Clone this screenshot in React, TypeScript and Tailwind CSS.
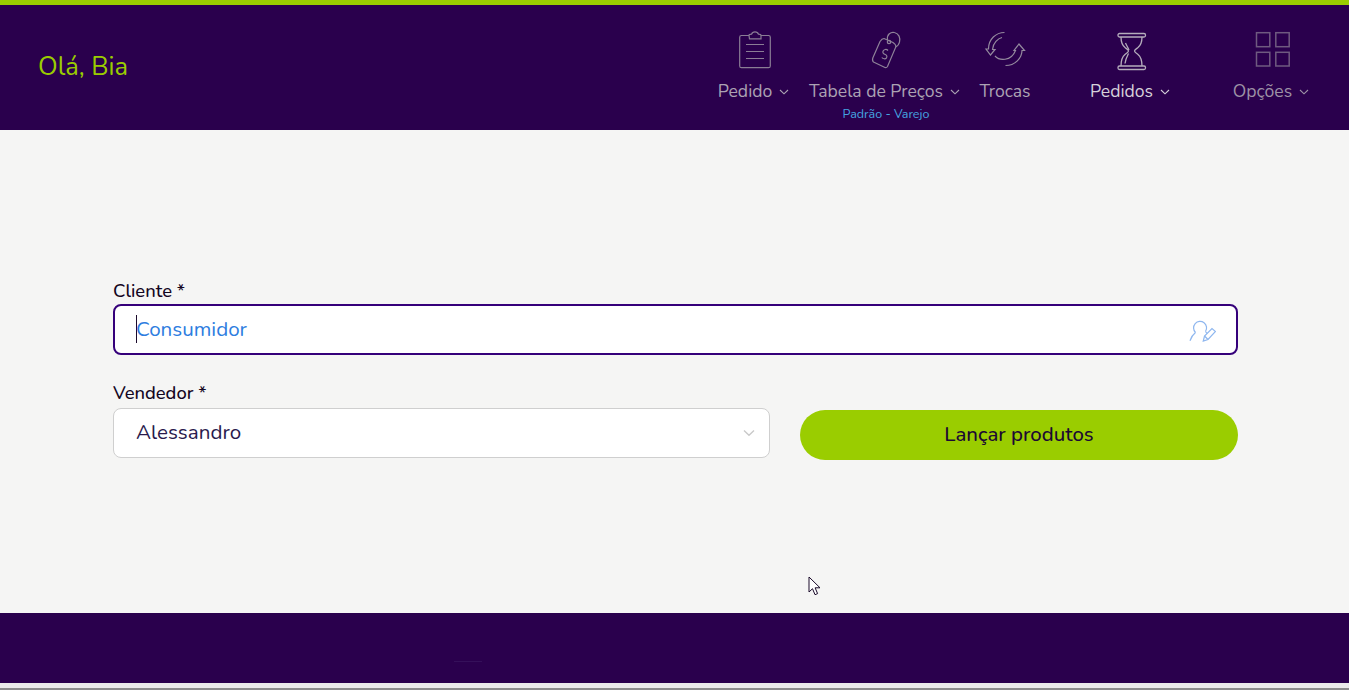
import React from "react";

const font = { fontFamily: '"Nunito", "Noto Sans", "Open Sans", sans-serif' };

function Chev({ className = "" }: { className?: string }) {
  return (
    <svg width="10" height="6" viewBox="0 0 10 6" fill="none" stroke="currentColor" strokeWidth="1.1" className={className}>
      <path d="M1 1l4 3.800L9 1" />
    </svg>
  );
}

function Clip() {
  return (
    <svg className="shrink-0" width="50" height="50" viewBox="0 0 50 50" fill="none" stroke="#8a7d95" strokeWidth="1.2">
      <path d="M20 10.500h-7.500a1.800 1.800 0 0 0-1.800 1.800v28.600a1.800 1.800 0 0 0 1.800 1.800h27a1.800 1.800 0 0 0 1.800-1.800V12.300a1.800 1.800 0 0 0-1.800-1.800H32" />
      <path d="M20.500 13.800h11.500v-3.300c0-1-1-1.300-2.500-1.300-.5-1.500-2-2.400-3.500-2.400s-3 .9-3.500 2.400c-1.500 0-2.500.3-2.500 1.300z" />
      <path d="M17 19.500h18M17 26.500h18M17 33.500h18" />
    </svg>
  );
}

function Tag() {
  return (
    <svg className="shrink-0" width="50" height="50" viewBox="0 0 50 50" fill="none" stroke="#8f8299" strokeWidth="1.200">
      <path d="M12.800 33 20 16.500Q22 13.500 24 13.500L33 17.500Q36 19.500 36 21.500L27.500 41.500Q26.500 43 25 42.500L13.500 37Q12 36 12.800 33Z" />
      <circle cx="29" cy="17" r="1.700" />
      <path d="M27.500 15C26.500 9.500 31 6.500 34.500 7.500 39 8.500 40.500 13 39.500 17 39 19.500 37.500 21 35.500 22" />
      <path d="M28 25.500C26.500 23.800 23.800 24.300 23 26.200 22.400 28 23.800 29 25.300 29.500 26.800 30 27.300 31.500 26.500 32.800 25.500 34.300 23 34 21.800 32.500" strokeWidth="1.200" />
    </svg>
  );
}

function Sync() {
  return (
    <svg className="shrink-0" width="60" height="50" viewBox="0 0 60 50" fill="none" stroke="#958a9f" strokeWidth="1.200">
      <path d="M29.500 7.500C21 7.500 13.500 14 13.500 24H11L15.500 30 20 24.500H17.500C18 18 23 13.500 27 12.500" />
      <path d="M20 31C24 35.500 36 37 40.500 25.500H39L44 19 49.500 25.500H47C47 33 40 40.500 30.500 40.500" />
    </svg>
  );
}

function Hourglass() {
  return (
    <svg className="-translate-x-px shrink-0" width="50" height="50" viewBox="0 0 50 50" fill="none" stroke="#b5adbc" strokeWidth="1.300">
      <rect x="13" y="8.500" width="27.500" height="3.500" rx="1.500" />
      <rect x="13" y="41" width="27.500" height="3.500" rx="1.500" />
      <path d="M16 12c0 6 1.500 8.500 4 10.500 2 1.600 3.500 2.500 3.500 3.500s-1.500 2-3.500 3.500C17.500 31.500 16 35 16 41" />
      <path d="M37 12c0 6-1.500 8.500-4 10.500-2 1.600-3.500 2.500-3.500 3.500s1.500 2 3.500 3.500c2.500 2 4 5.500 4 11.500" />
      <path d="M20.500 18c1 2.500 2.500 4.500 3.500 7M23.500 28.500C22 31.500 20.500 34 20 38.500" />
    </svg>
  );
}

function Grid4() {
  return (
    <svg className="shrink-0" width="50" height="50" viewBox="0 0 50 50" fill="none" stroke="#6f5a80" strokeWidth="1.500">
      <rect x="9.500" y="7.700" width="13.300" height="14" />
      <rect x="28.800" y="7.700" width="13.400" height="14" />
      <rect x="9.500" y="27.300" width="13.300" height="13.700" />
      <rect x="28.800" y="27.300" width="13.400" height="13.700" />
    </svg>
  );
}

function UserEdit() {
  return (
    <svg className="shrink-0" width="28" height="26" viewBox="0 0 28 26" fill="none" stroke="#8fb7ef" strokeWidth="1.200">
      <path d="M7.500 15.500A6.500 6.500 0 1 1 17.500 14.500" />
      <path d="M7.500 15.500C5 17.500 3 20.500 2 23.700" />
      <path d="M17.500 14.500 19 16.500" />
      <path d="M15.300 24 16.500 19 24 11.500 27.500 14.500 20 22.500Z" />
      <path d="M16.500 19 20 22.500" />
    </svg>
  );
}

function NavItem({
  icon,
  label,
  chev = true,
  tone,
  className = "",
}: {
  icon: React.ReactNode;
  label: string;
  chev?: boolean;
  tone: string;
  className?: string;
}) {
  return (
    <div className={`flex flex-col items-center ${className}`}>
      <div className="flex h-[38px] items-center justify-center">{icon}</div>
      <div className={`mt-[10px] flex h-[24px] items-center whitespace-nowrap text-[17.6px] ${tone}`}>
        <span>{label}</span>
        {chev && <Chev className="ml-[7px] mr-px mt-[1px]" />}
      </div>
    </div>
  );
}

export default function App() {
  return (
    <div className="flex h-[690px] w-[1349px] flex-col overflow-hidden bg-[#ebebeb]" style={font}>
      <header className="flex h-[130px] shrink-0 items-start justify-between border-t-[5px] border-[#9acd00] bg-[#2a004d] pl-[38px] pr-[39px]">
        <div className="mt-[45px] text-[25.6px] leading-[34px] text-[#9acd00]">Olá, Bia</div>
        <nav className="mt-[26px] flex items-start">
          <NavItem icon={<Clip />} label="Pedido" tone="text-[#aca3b3]" className="w-[72px]" />
          <div className="ml-[19px] w-[152px]">
            <NavItem icon={<Tag />} label="Tabela de Preços" tone="text-[#aca3b3]" />
            <div className="mt-[3px] pl-[2px] text-center text-[12.5px] leading-[16px] text-[#45a5e0]">Padrão - Varejo</div>
          </div>
          <NavItem icon={<Sync />} label="Trocas" chev={false} tone="text-[#aca3b3]" className="ml-[19px] w-[50px]" />
          <NavItem icon={<Hourglass />} label="Pedidos" tone="text-[#d6d1da]" className="ml-[61px] w-[79px]" />
          <NavItem icon={<Grid4 />} label="Opções" tone="text-[#9d92a6]" className="ml-[63px] w-[77px]" />
        </nav>
      </header>

      <main className="relative h-[483px] shrink-0 bg-[#f5f5f4] pl-[113px] pr-[111px] pt-[150px]">
        <label className="block h-[24px] text-[18.4px] font-medium leading-[22px] text-[#14061f]">Cliente *</label>
        <div className="flex h-[51px] items-center justify-between rounded-[8px] border-2 border-[#35007a] bg-white pl-[21px] pr-[20px]">
          <div className="flex items-center">
            <span className="h-[28px] w-px bg-[#1b0a2c]" />
            <span className="-ml-px text-[20.6px] text-[#2e7de0]">Consumidor</span>
          </div>
          <UserEdit />
        </div>
        <div className="mt-[27px] flex gap-[30px]">
          <div className="w-[657px]">
            <label className="block h-[26px] text-[18.4px] font-medium leading-[22px] text-[#14061f]">Vendedor *</label>
            <div className="flex h-[50px] items-center justify-between rounded-[8px] border border-[#cfcfcf] bg-white pl-[22px] pr-[15px]">
              <span className="pb-[2px] text-[20.6px] text-[#2a1a4d]">Alessandro</span>
              <Chev className="scale-125 text-[#c9c9c9]" />
            </div>
          </div>
          <button className="mt-[28px] flex h-[50px] w-[438px] items-center justify-center rounded-full bg-[#9acd00] pb-[2px] text-[20.4px] font-medium text-[#1c0833]">
            Lançar produtos
          </button>
        </div>
        <svg className="absolute left-[808px] top-[446px]" width="14" height="21" viewBox="0 0 14 21">
          <path d="M1 1v15l3.500-3.300 2.500 6 2.600-1.100-2.500-5.800H12z" fill="#fff" stroke="#1a0a2a" strokeWidth="1" />
        </svg>
      </main>

      <footer className="h-[70px] shrink-0 bg-[#2a004d] pl-[454px] pt-[48px]">
        <div className="h-px w-[28px] bg-[#35105a]" />
      </footer>
      <div className="h-[5px] shrink-0 bg-[#ebebeb]" />
      <div className="h-[2px] shrink-0 bg-[#8c8c8c]" />
    </div>
  );
}
